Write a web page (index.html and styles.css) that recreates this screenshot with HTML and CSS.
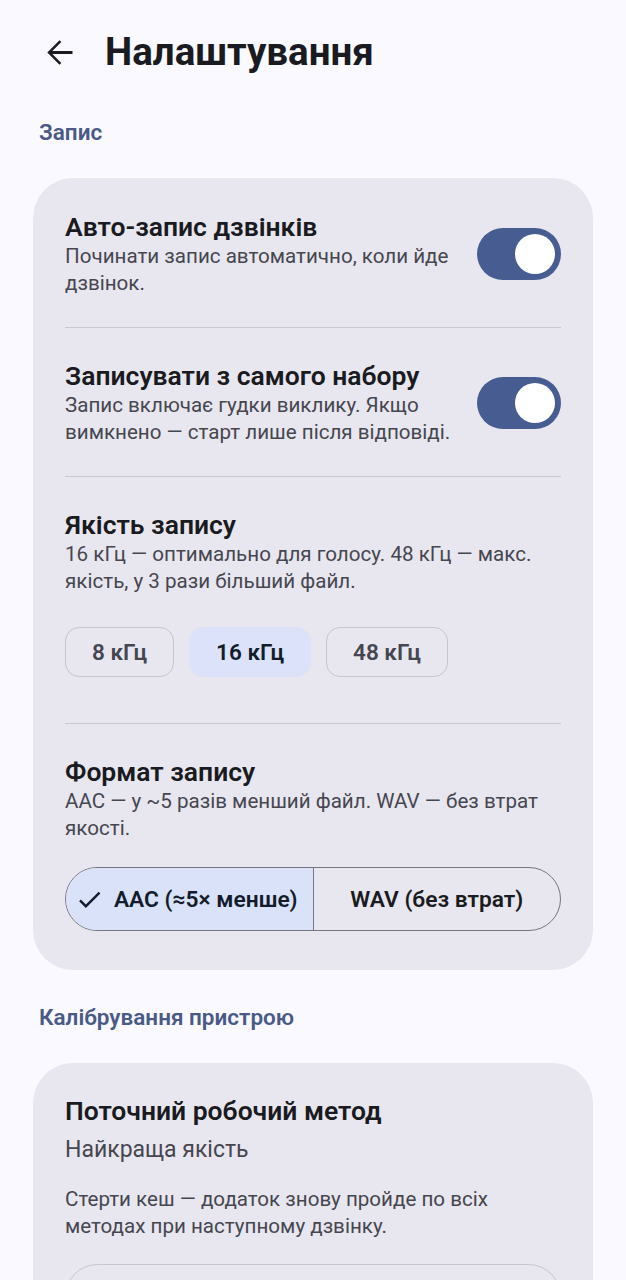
FILE: index.html
```html
<!DOCTYPE html>
<html lang="uk">
<head>
<meta charset="utf-8">
<title>Налаштування</title>
<link rel="stylesheet" href="styles.css">
</head>
<body>
<div class="page">
  <header class="topbar">
    <svg class="back" viewBox="0 0 24 24" width="39" height="39" aria-hidden="true">
      <path d="M20 11.1H7.6l5.5-5.5L12 4.5 4.5 12l7.5 7.5 1.1-1.1-5.5-5.5H20z" fill="#1a1b21"/>
    </svg>
    <h1 class="title">Налаштування</h1>
  </header>

  <div class="section-label">Запис</div>
  <section class="card">
    <div class="row">
      <div class="row-text">
        <div class="row-title">Авто-запис дзвінків</div>
        <div class="row-sub">Починати запис автоматично, коли йде дзвінок.</div>
      </div>
      <div class="switch"><div class="knob"></div></div>
    </div>
    <div class="divider"></div>
    <div class="row">
      <div class="row-text">
        <div class="row-title">Записувати з самого набору</div>
        <div class="row-sub">Запис включає гудки виклику. Якщо вимкнено — старт лише після відповіді.</div>
      </div>
      <div class="switch"><div class="knob"></div></div>
    </div>
    <div class="divider"></div>
    <div class="row column">
      <div class="row-title">Якість запису</div>
      <div class="row-sub">16 кГц — оптимально для голосу. 48 кГц — макс. якість, у 3 рази більший файл.</div>
      <div class="chips">
        <div class="chip">8 кГц</div>
        <div class="chip selected">16 кГц</div>
        <div class="chip">48 кГц</div>
      </div>
    </div>
    <div class="divider"></div>
    <div class="row column last">
      <div class="row-title">Формат запису</div>
      <div class="row-sub">AAC — у ~5 разів менший файл. WAV — без втрат якості.</div>
      <div class="segmented">
        <div class="seg selected">
          <svg class="check" viewBox="0 0 24 24" width="29" height="29" aria-hidden="true">
            <path d="M9 16.2L4.8 12l-1.4 1.4L9 19 21 7l-1.4-1.4z" fill="#131c2b"/>
          </svg>
          <span>AAC (≈5× менше)</span>
        </div>
        <div class="seg">WAV (без втрат)</div>
      </div>
    </div>
  </section>

  <div class="section-label">Калібрування пристрою</div>
  <section class="card card2">
    <div class="row-title">Поточний робочий метод</div>
    <div class="method">Найкраща якість</div>
    <div class="row-sub hint">Стерти кеш — додаток знову пройде по всіх методах при наступному дзвінку.</div>
    <div class="outlined-btn"><span>Стерти кеш</span></div>
  </section>
</div>
</body>
</html>
```

FILE: styles.css
```css
* { box-sizing: border-box; }
html, body {
  margin: 0;
  padding: 0;
  background: #f9f9ff;
  font-family: Roboto, "Noto Sans", "Liberation Sans", sans-serif;
  color: #1a1b21;
}
.page {
  padding: 0 33px 40px;
}
.topbar {
  height: 104px;
  display: flex;
  align-items: center;
  margin-left: 7px;
}
.back {
  flex: none;
  margin-right: 26px;
}
.title {
  margin: 0;
  font-size: 38.5px;
  font-weight: 700;
  line-height: 46px;
  color: #1a1b21;
}
.section-label {
  margin: 14px 0 32px 6px;
  font-size: 22.5px;
  line-height: 28px;
  font-weight: 600;
  color: #4a5a86;
}
.card + .section-label {
  margin-top: 33px;
}
.card {
  background: #e8e7ef;
  border-radius: 40px;
  padding: 0 32px;
}
.row {
  display: flex;
  align-items: center;
  gap: 24px;
  padding: 33px 0 30px;
}
.row + .divider + .row { padding-top: 32px; }
.row.column {
  flex-direction: column;
  align-items: stretch;
  gap: 0;
}
.row.last { padding-bottom: 39px; }
.row-text { flex: 1; min-width: 0; }
.row-title {
  font-size: 26.5px;
  line-height: 32px;
  font-weight: 600;
  color: #1a1b21;
}
.row-sub {
  font-size: 20.6px;
  line-height: 27px;
  color: #46464f;
}
.divider {
  height: 1px;
  background: #c9c8d2;
}
.switch {
  flex: none;
  width: 84px;
  height: 52px;
  border-radius: 26px;
  background: #475d92;
  display: flex;
  align-items: center;
  justify-content: flex-end;
  padding-right: 6px;
}
.knob {
  width: 40px;
  height: 40px;
  border-radius: 50%;
  background: #ffffff;
}
.chips {
  display: flex;
  gap: 15px;
  margin: 32px 0 16px;
}
.chip {
  height: 50px;
  padding: 0 26px;
  border: 1.5px solid #c6c5d0;
  border-radius: 14px;
  display: flex;
  align-items: center;
  font-size: 22.5px;
  font-weight: 600;
  color: #45464f;
}
.chip.selected {
  background: #dce2f9;
  border-color: #dce2f9;
  color: #131c2b;
}
.segmented {
  margin-top: 25px;
  height: 64px;
  border: 1.5px solid #74777f;
  border-radius: 32px;
  display: flex;
  overflow: hidden;
}
.seg {
  flex: 1;
  display: flex;
  align-items: center;
  justify-content: center;
  gap: 10px;
  font-size: 22.75px;
  font-weight: 600;
  color: #1a1b21;
}
.seg.selected {
  background: #dae2f9;
  color: #131c2b;
  border-right: 1.5px solid #74777f;
}
.check { flex: none; margin-left: -6px; }
.card2 {
  padding-top: 32px;
  padding-bottom: 32px;
}
.method {
  margin-top: 7px;
  font-size: 23px;
  line-height: 32px;
  color: #46464f;
}
.hint {
  margin-top: 20px;
}
.outlined-btn {
  margin-top: 24px;
  height: 65px;
  border: 1.5px solid #c6c5d0;
  border-radius: 33px;
  display: flex;
  align-items: center;
  justify-content: center;
  font-size: 22.75px;
  line-height: 26px;
  font-weight: 600;
  color: #475d92;
}
```
